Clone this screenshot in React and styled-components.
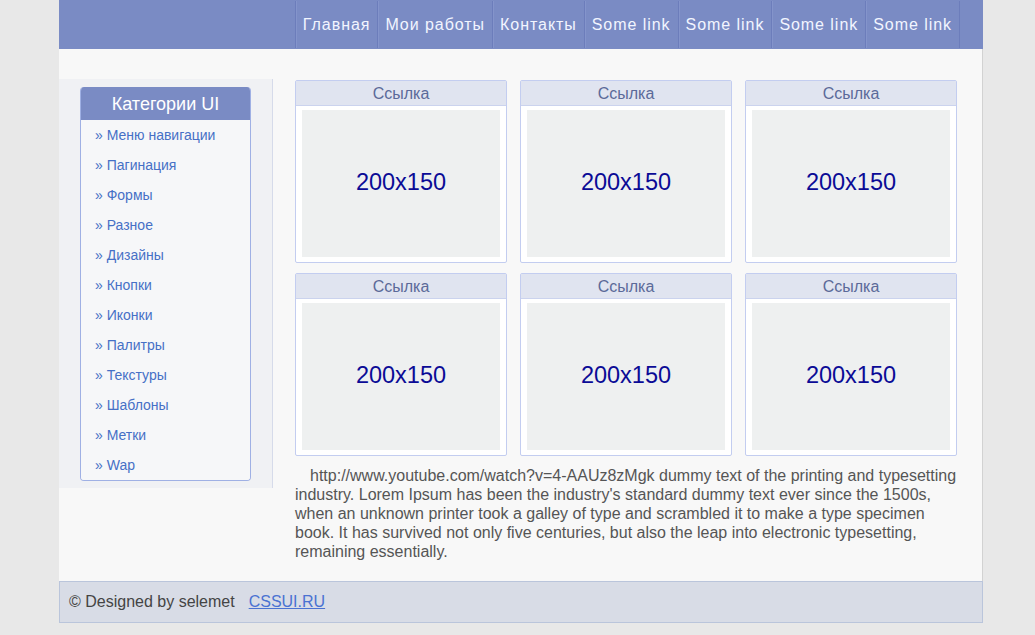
import styled, { createGlobalStyle } from "styled-components";

const GlobalStyle = createGlobalStyle`
    html, body {
        margin: 0;
        padding: 0;
        background: #e8e8e8;
        font-family: "Liberation Sans", Arial, sans-serif;
    }
`;

export const Wrapper = styled.div`
    width: 923px;
    margin-left: 59px;
    border-right: 1px solid #d2d2d2;
    background: #f8f8f8;
`;

export const Header = styled.header`
    height: 49px;
    margin-right: -1px;
    background: #7a8bc4;
    display: flex;
    justify-content: flex-end;
    padding-right: 23px;
`;

export const Nav = styled.nav`
    display: flex;
    margin-top: 1px;
    height: 47px;
    border-right: 1px solid #6c7dbb;
`;

export const NavLink = styled.a`
    display: flex;
    align-items: center;
    padding: 1px 7px 0 7px;
    border-left: 1px solid #6c7dbb;
    box-shadow: inset 1px 0 0 #8494cb;
    color: #f2f5ff;
    font-size: 16px;
    letter-spacing: 0.95px;
    text-decoration: none;
`;

export const Content = styled.div`
    display: flex;
    align-items: flex-start;
    padding: 31px 0 20px 0;
`;

export const Sidebar = styled.aside`
    width: 171px;
    margin-top: -1px;
    padding: 8px 21px 7px 21px;
    background: #f0f1f4;
    border-right: 1px solid #d6dbea;
`;

export const CatBox = styled.div`
    border: 1px solid #9fb0e4;
    border-top: none;
    border-radius: 4px;
    overflow: hidden;
`;

export const CatTitle = styled.div`
    height: 33px;
    line-height: 34px;
    background: #7a8bc4;
    color: #fff;
    font-size: 18px;
    text-align: center;
`;

export const CatList = styled.ul`
    list-style: none;
    margin: 0;
    padding: 0;
    background: #f6f7f9;
`;

export const CatItem = styled.li`
    height: 30px;
    line-height: 30px;
    padding-left: 14px;
    font-size: 14px;
    color: #4670c6;
`;

export const Main = styled.main`
    width: 662px;
    margin-left: 22px;
`;

export const Grid = styled.div`
    display: grid;
    grid-template-columns: repeat(3, 212px);
    column-gap: 13px;
    row-gap: 10px;
`;

export const Card = styled.div`
    border: 1px solid #c3cdf0;
    border-radius: 2px;
    background: #fff;
`;

export const CardTitle = styled.div`
    height: 24px;
    line-height: 25px;
    background: #e0e4f0;
    border-bottom: 1px solid #cbd3ee;
    color: #5b6a99;
    font-size: 16px;
    text-align: center;
`;

export const Thumb = styled.div`
    margin: 4px 6px 5px 6px;
    height: 145px;
    padding-bottom: 2px;
    background: #eef0f0;
    display: flex;
    align-items: center;
    justify-content: center;
    color: #0b0b96;
    font-size: 23.5px;
`;

export const Text = styled.p`
    margin: 10px 0 0 0;
    text-indent: 15px;
    font-size: 16px;
    line-height: 19px;
    color: #555;
`;

export const Footer = styled.footer`
    height: 40px;
    margin-right: -1px;
    display: flex;
    align-items: center;
    padding-left: 9px;
    background: #d8dce6;
    border: 1px solid #bac5db;
    color: #444;
    font-size: 16px;
    a {
        margin-left: 14px;
        color: #4a72d2;
    }
`;

const links = ["Главная", "Мои работы", "Контакты", "Some link", "Some link", "Some link", "Some link"];
const categories = [
    "Меню навигации", "Пагинация", "Формы", "Разное", "Дизайны", "Кнопки",
    "Иконки", "Палитры", "Текстуры", "Шаблоны", "Метки", "Wap",
];

const App = () => {
    return (
        <>
            <GlobalStyle />
            <Wrapper>
                <Header>
                    <Nav>
                        {links.map((l, i) => <NavLink key={i} href="#">{l}</NavLink>)}
                    </Nav>
                </Header>
                <Content>
                    <Sidebar>
                        <CatBox>
                            <CatTitle>Категории UI</CatTitle>
                            <CatList>
                                {categories.map(c => <CatItem key={c}>» {c}</CatItem>)}
                            </CatList>
                        </CatBox>
                    </Sidebar>
                    <Main>
                        <Grid>
                            {[0, 1, 2, 3, 4, 5].map(i => (
                                <Card key={i}>
                                    <CardTitle>Ссылка</CardTitle>
                                    <Thumb>200x150</Thumb>
                                </Card>
                            ))}
                        </Grid>
                        <Text>
                            http://www.youtube.com/watch?v=4-AAUz8zMgk dummy text of the printing and typesetting
                            industry. Lorem Ipsum has been the industry's standard dummy text ever since the 1500s,
                            when an unknown printer took a galley of type and scrambled it to make a type specimen
                            book. It has survived not only five centuries, but also the leap into electronic typesetting,
                            remaining essentially.
                        </Text>
                    </Main>
                </Content>
                <Footer>
                    © Designed by selemet <a href="#">CSSUI.RU</a>
                </Footer>
            </Wrapper>
        </>
    );
}

export default App;
